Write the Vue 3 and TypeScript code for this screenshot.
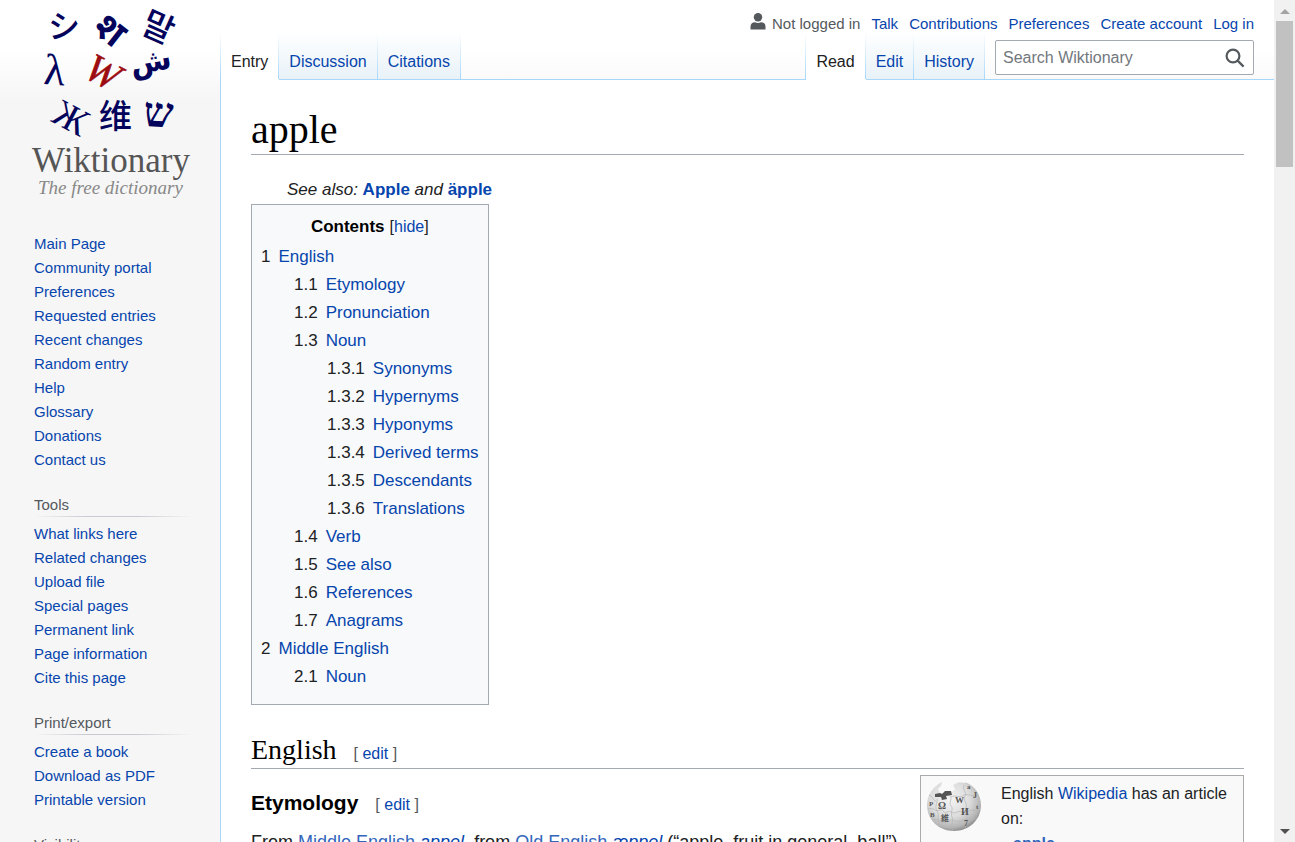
<script setup lang="ts">
import { ref } from 'vue'

interface TocEntry {
  num: string
  label: string
  children?: TocEntry[]
}

const personalLinks: string[] = ['Talk', 'Contributions', 'Preferences', 'Create account', 'Log in']

const mainLinks: string[] = [
  'Main Page',
  'Community portal',
  'Preferences',
  'Requested entries',
  'Recent changes',
  'Random entry',
  'Help',
  'Glossary',
  'Donations',
  'Contact us',
]

const portals: { title: string; links: string[] }[] = [
  {
    title: 'Tools',
    links: [
      'What links here',
      'Related changes',
      'Upload file',
      'Special pages',
      'Permanent link',
      'Page information',
      'Cite this page',
    ],
  },
  { title: 'Print/export', links: ['Create a book', 'Download as PDF', 'Printable version'] },
  { title: 'Visibility', links: [] },
]

const toc: TocEntry[] = [
  {
    num: '1',
    label: 'English',
    children: [
      { num: '1.1', label: 'Etymology' },
      { num: '1.2', label: 'Pronunciation' },
      {
        num: '1.3',
        label: 'Noun',
        children: [
          { num: '1.3.1', label: 'Synonyms' },
          { num: '1.3.2', label: 'Hypernyms' },
          { num: '1.3.3', label: 'Hyponyms' },
          { num: '1.3.4', label: 'Derived terms' },
          { num: '1.3.5', label: 'Descendants' },
          { num: '1.3.6', label: 'Translations' },
        ],
      },
      { num: '1.4', label: 'Verb' },
      { num: '1.5', label: 'See also' },
      { num: '1.6', label: 'References' },
      { num: '1.7', label: 'Anagrams' },
    ],
  },
  { num: '2', label: 'Middle English', children: [{ num: '2.1', label: 'Noun' }] },
]

const tocOpen = ref(true)
const query = ref('')
</script>

<template>
  <div class="window">
    <div class="page">
      <aside class="sidebar">
        <a class="logo" href="#" aria-label="Wiktionary, the free dictionary">
          <svg width="220" height="208" viewBox="0 0 220 208" aria-hidden="true">
            <g class="glyphs">
              <text class="cjk" transform="translate(48 38)" font-size="32">シ</text>
              <text class="deva" transform="translate(91 31) rotate(38)" font-size="38">श</text>
              <text class="cjk" transform="translate(139 32) rotate(24)" font-size="34">말</text>
              <text class="serif" transform="translate(43 84) rotate(4)" font-size="44">λ</text>
              <text class="serif red" transform="translate(82 76) rotate(28)" font-size="40">W</text>
              <text class="arab" transform="translate(132 75) rotate(-10)" font-size="30">ش</text>
              <text class="serif" transform="translate(50 121) rotate(28)" font-size="38">Ж</text>
              <text class="cjk sc" transform="translate(99 128)" font-size="33">维</text>
              <text class="serif heb" transform="translate(143 126) rotate(3)" font-size="42">ש</text>
            </g>
            <text class="wordmark" x="32" y="172" font-size="35">Wiktionary</text>
            <text class="tagline" x="38" y="194" font-size="19">The free dictionary</text>
          </svg>
        </a>
        <nav class="portal-main" aria-label="Navigation">
          <ul class="links">
            <li v-for="l in mainLinks" :key="l"><a href="#">{{ l }}</a></li>
          </ul>
        </nav>
        <nav v-for="p in portals" :key="p.title" class="portal" :aria-label="p.title">
          <h3>{{ p.title }}</h3>
          <ul class="links">
            <li v-for="l in p.links" :key="l"><a href="#">{{ l }}</a></li>
          </ul>
        </nav>
      </aside>

      <div class="main">
        <header class="head">
          <div class="personal">
            <svg class="user" width="16" height="17" viewBox="0 0 16 17" aria-hidden="true">
              <circle cx="8" cy="4.2" r="4.2" />
              <path d="M0.5 16.5V13.5C0.5 10.6 2.6 9.2 5 9.2C6.8 10.2 9.2 10.2 11 9.2C13.4 9.2 15.5 10.6 15.5 13.5V16.5Z" />
            </svg>
            <span class="anon">Not logged in</span>
            <a v-for="l in personalLinks" :key="l" href="#">{{ l }}</a>
          </div>
          <div class="tabs">
            <a class="tab active" href="#">Entry</a>
            <a class="tab" href="#">Discussion</a>
            <a class="tab" href="#">Citations</a>
            <div class="filler"></div>
            <a class="tab active" href="#">Read</a>
            <a class="tab" href="#">Edit</a>
            <a class="tab" href="#">History</a>
            <form class="search" role="search" @submit.prevent>
              <div class="search-box">
                <input v-model="query" type="search" placeholder="Search Wiktionary" aria-label="Search Wiktionary" />
                <button type="submit" aria-label="Go">
                  <svg width="20" height="20" viewBox="0 0 20 20" aria-hidden="true">
                    <circle cx="8" cy="8" r="6.4" />
                    <path d="M12.6 12.6L18.6 18.6" />
                  </svg>
                </button>
              </div>
            </form>
          </div>
        </header>

        <main class="content">
          <h1>apple</h1>
          <p class="see-also">
            See also: <b><a href="#">Apple</a></b> and <b><a href="#">äpple</a></b>
          </p>

          <div class="toc">
            <div class="toc-title">
              <h2>Contents</h2>
              <span>[<button type="button" @click="tocOpen = !tocOpen">{{ tocOpen ? 'hide' : 'show' }}</button>]</span>
            </div>
            <ul v-if="tocOpen">
              <li v-for="a in toc" :key="a.num">
                <a href="#"><span class="num">{{ a.num }}</span>{{ a.label }}</a>
                <ul v-if="a.children">
                  <li v-for="b in a.children" :key="b.num">
                    <a href="#"><span class="num">{{ b.num }}</span>{{ b.label }}</a>
                    <ul v-if="b.children">
                      <li v-for="c in b.children" :key="c.num">
                        <a href="#"><span class="num">{{ c.num }}</span>{{ c.label }}</a>
                      </li>
                    </ul>
                  </li>
                </ul>
              </li>
            </ul>
          </div>

          <h2 class="lang">English<span class="edit">[ <a href="#">edit</a> ]</span></h2>

          <aside class="sister">
            <svg class="globe" width="56" height="54" viewBox="0 0 56 54" aria-hidden="true">
              <defs>
                <radialGradient id="ball" cx="0.42" cy="0.35" r="0.68">
                  <stop offset="0" stop-color="#f4f4f4" />
                  <stop offset="0.55" stop-color="#dcdcdc" />
                  <stop offset="0.85" stop-color="#b4b4b4" />
                  <stop offset="1" stop-color="#858585" />
                </radialGradient>
              </defs>
              <path class="ball" d="M16 1C6 6 1 15 1 24C1 39 13 50 28 50C43 50 55 39 55 24C55 14 49 5 40 1.500C37 3 34 0 31 2L27 4L29 8L25 12L14 12L12 8L15 5Z" />
              <path class="hole" d="M9 13L14 12L16 13L19 10H25L26 14L20 15L21 18L16 19L15 16L9 16Z" />
              <g class="seams">
                <path d="M3 14C8 16 6 19 10 20M2 28C8 26 9 31 14 29C18 27 16 33 21 31C26 29 26 34 31 31C37 29 37 34 43 30C47 28 49 31 54 28" />
                <path d="M24 15C27 19 22 21 25 25C28 27 24 31 26 36C28 40 24 44 27 50M38 4C36 9 41 11 39 15C36 19 42 22 40 27C38 31 43 35 40 39C38 43 41 45 39 48M11 18C12 22 8 25 11 30C14 34 10 38 15 45" />
                <path d="M25 16C30 13 33 18 38 14C43 12 46 17 52 14M6 39C13 37 15 43 21 40C27 37 31 43 37 39C42 37 45 40 51 37" />
              </g>
              <g class="letters">
                <text x="12" y="28" font-size="10">Ω</text>
                <text x="29" y="22" font-size="9">W</text>
                <text x="35" y="34" font-size="10">И</text>
                <text x="15" y="40" font-size="8">維</text>
                <text x="38" y="45" font-size="8">7</text>
                <text x="3" y="25" font-size="7">P</text>
                <text x="47" y="17" font-size="8">J</text>
                <text x="4" y="36" font-size="7">B</text>
                <text x="41" y="8" font-size="7">a</text>
                <text x="50" y="28" font-size="7">t</text>
              </g>
            </svg>
            <div class="sister-text">
              English <a href="#">Wikipedia</a> has an article on:
              <div class="target"><b><a href="#">apple</a></b></div>
            </div>
          </aside>

          <h3 class="sub">Etymology<span class="edit">[ <a href="#">edit</a> ]</span></h3>
          <p class="body-text">
            From <a href="#">Middle English</a> <i><a class="term" href="#">appel</a></i>, from
            <a href="#">Old English</a> <i><a class="term" href="#">æppel</a></i> (“apple, fruit in general, ball”)
          </p>
        </main>
      </div>
    </div>

    <div class="scrollbar" aria-hidden="true">
      <svg width="10" height="5" viewBox="0 0 10 5"><path class="dim" d="M0 5L5 0L10 5Z" /></svg>
      <div class="thumb"></div>
      <svg width="10" height="5" viewBox="0 0 10 5"><path d="M0 0L5 5L10 0Z" /></svg>
    </div>
  </div>
</template>

<style>
body {
  margin: 0;
  background: #f6f6f6;
}
</style>

<style scoped>
.window {
  display: flex;
  height: 100vh;
  overflow: hidden;
  font-family: "Liberation Sans", Arial, sans-serif;
  color: #202122;
}

a {
  color: #0645ad;
  text-decoration: none;
}

a:hover {
  text-decoration: underline;
}

ul {
  margin: 0;
  padding: 0;
  list-style: none;
}

.page {
  flex: 1;
  min-width: 0;
  display: grid;
  grid-template-columns: 220px 1fr;
  overflow: hidden;
  background: linear-gradient(#fff 50px, #f6f6f6 100px);
}

/* Sidebar */
.logo {
  display: block;
  height: 208px;
}

.logo svg {
  display: block;
  overflow: visible;
}

.glyphs {
  fill: #04045c;
}

.cjk {
  font-family: "Noto Sans CJK JP", sans-serif;
  font-weight: 500;
}

.sc {
  font-family: "Noto Sans CJK SC", sans-serif;
}

.deva {
  font-family: "Noto Sans", sans-serif;
  font-weight: 700;
}

.arab {
  font-family: "DejaVu Sans", sans-serif;
  font-weight: 700;
}

.serif {
  font-family: "Liberation Serif", serif;
}

.heb {
  font-weight: 700;
}

.red {
  fill: #9c0c10;
  font-style: italic;
  stroke: #9c0c10;
  stroke-width: 0.6;
}

.wordmark {
  font-family: "Liberation Serif", serif;
  fill: #555;
}

.tagline {
  font-family: "Liberation Serif", serif;
  font-style: italic;
  fill: #888;
}

.portal-main {
  padding: 24px 10px 0 34px;
}

.portal {
  padding: 23px 28px 0 34px;
}

.portal h3 {
  margin: 0 0 5px;
  padding-bottom: 2px;
  font-size: 15px;
  line-height: 20px;
  font-weight: 400;
  color: #54595d;
  background: linear-gradient(to right, transparent, #c8ccd1 33%, #c8ccd1 66%, transparent) bottom / 100% 1px no-repeat;
}

.links {
  font-size: 15px;
  line-height: 24px;
}

/* Header */
.main {
  display: flex;
  flex-direction: column;
  min-width: 0;
}

.personal {
  display: flex;
  justify-content: flex-end;
  gap: 11px;
  padding: 15px 20px 0 0;
  font-size: 15px;
  line-height: 17px;
}

.user {
  margin: -2px -5px 0 0;
  fill: #54595d;
}

.anon {
  color: #54595d;
}

.tabs {
  display: flex;
  height: 48px;
  font-size: 16px;
  line-height: 18px;
  background: linear-gradient(to bottom, #fff0, #a7d7f9) left / 1px 100% no-repeat;
  padding-left: 1px;
}

.tab {
  box-sizing: border-box;
  padding: 21px 11px 0 10px;
  border-bottom: 1px solid #a7d7f9;
  background:
    linear-gradient(to bottom, #fff, #a7d7f9) right / 1px 100% no-repeat,
    linear-gradient(to bottom, #fff, #e8f2f8);
}

.tab.active {
  color: #202122;
  border-bottom-color: #fff;
  background:
    linear-gradient(to bottom, #fff, #a7d7f9) right / 1px 100% no-repeat,
    #fff;
}

.filler {
  flex: 1;
  border-bottom: 1px solid #a7d7f9;
  background: linear-gradient(to bottom, #fff, #a7d7f9) right / 1px 100% no-repeat;
}

.search {
  box-sizing: border-box;
  width: 289px;
  padding: 8px 20px 4px 10px;
  border-bottom: 1px solid #a7d7f9;
}

.search-box {
  box-sizing: border-box;
  display: flex;
  align-items: center;
  height: 35px;
  border: 1px solid #a2a9b1;
  border-radius: 2px;
  background: #fff;
}

.search input {
  flex: 1;
  min-width: 0;
  padding: 0 0 0 7px;
  border: 0;
  outline: 0;
  background: transparent;
  font: 16px "Liberation Sans", Arial, sans-serif;
  color: #202122;
}

.search input::placeholder {
  color: #72777d;
}

.search button {
  display: flex;
  padding: 0 8px;
  border: 0;
  background: transparent;
}

.search button svg {
  fill: none;
  stroke: #54595d;
  stroke-width: 2.2;
}

/* Article */
.content {
  flex: 1;
  padding: 28px 30px 0;
  border-left: 1px solid #a7d7f9;
  background: #fff;
  font-size: 17px;
  line-height: 28px;
}

h1,
.lang {
  margin: 0;
  font-family: "Liberation Serif", Georgia, serif;
  font-weight: 400;
  color: #000;
  border-bottom: 1px solid #a2a9b1;
}

h1 {
  padding-bottom: 2px;
  font-size: 40px;
  line-height: 44px;
}

.see-also {
  margin: 21px 0 0 36px;
  font-style: italic;
}

.see-also b {
  font-style: normal;
}

.toc {
  width: fit-content;
  padding: 9px 9px 13px;
  border: 1px solid #a2a9b1;
  background: #f8f9fa;
}

.toc-title {
  display: flex;
  justify-content: center;
  gap: 5px;
  margin-bottom: 3px;
  line-height: 26px;
}

.toc-title h2 {
  margin: 0;
  font-size: 17px;
  color: #000;
}

.toc-title span {
  font-size: 16px;
}

.toc-title button {
  padding: 0;
  border: 0;
  background: none;
  font: inherit;
  color: #0645ad;
  cursor: pointer;
}

.toc ul ul {
  margin-left: 33px;
}

.num {
  margin-right: 8px;
  color: #202122;
}

.lang {
  margin-top: 29px;
  padding-bottom: 2px;
  font-size: 28px;
  line-height: 32px;
}

.edit {
  margin-left: 17px;
  font: 16px "Liberation Sans", Arial, sans-serif;
  color: #54595d;
}

.sub {
  margin: 20px 0 0;
  font-size: 21px;
  line-height: 28px;
  color: #000;
}

.body-text {
  margin: 11px 0 0;
  font-size: 18px;
}

.body-text a {
  color: #3366bb;
}

.body-text a.term {
  color: #0645ad;
}

.sister {
  float: right;
  box-sizing: border-box;
  display: flex;
  gap: 19px;
  width: 324px;
  margin-top: 6px;
  padding: 5px 10px 5px 5px;
  border: 1px solid #aaa;
  background: #f9f9f9;
  font-size: 16px;
  line-height: 25px;
}

.globe {
  flex: none;
}

.ball {
  fill: url(#ball);
}

.hole {
  fill: #555;
}

.seams {
  fill: none;
  stroke: #b4b4b4;
  stroke-width: 0.7;
}

.letters {
  font-family: "Liberation Serif", "Noto Sans CJK JP", serif;
  font-weight: 700;
  fill: #555;
}

.target {
  margin-left: 12px;
}

.target a {
  color: #3366bb;
}

/* Scrollbar */
.scrollbar {
  display: flex;
  flex-direction: column;
  align-items: center;
  width: 21px;
  padding: 9px 0 8px;
  box-sizing: border-box;
  background: #f1f1f1;
}

.scrollbar path {
  fill: #505050;
}

.scrollbar .dim {
  fill: #a3a3a3;
}

.thumb {
  width: 17px;
  height: 146px;
  margin: 7px 0 auto;
  background: #c1c1c1;
}
</style>
